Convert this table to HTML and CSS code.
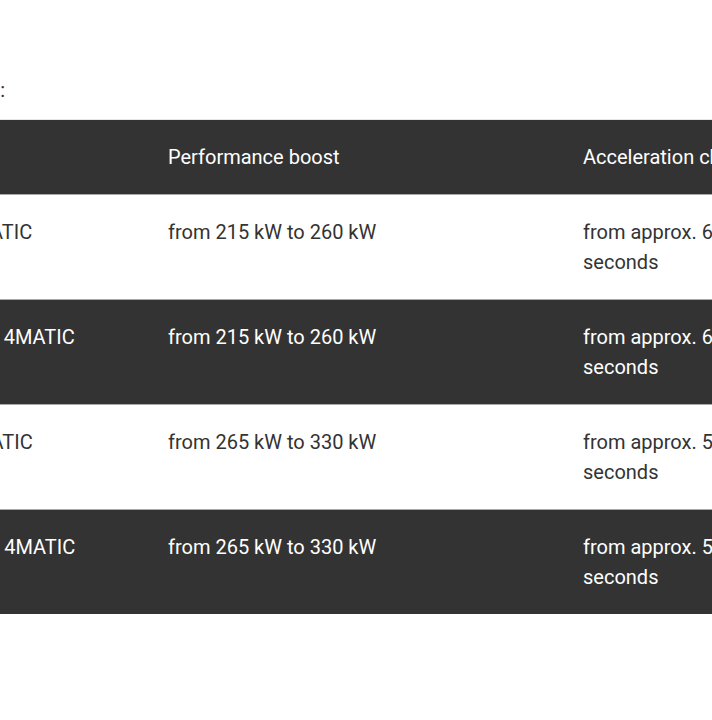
FILE: index.html
```html
<!DOCTYPE html>
<html lang="en">
<head>
<meta charset="utf-8">
<link rel="stylesheet" href="styles.css">
</head>
<body>
<div class="viewport">
  <div class="page">
    <div class="intro"><p class="intro-text">The performance boost is available for the following models:</p></div>
    <div class="table">
      <div class="row head">
        <div class="cell c1">Model</div>
        <div class="cell c2">Performance boost</div>
        <div class="cell c3">Acceleration change 0–100 km/h</div>
      </div>
      <div class="row light">
        <div class="cell c1"><span class="model">EQE 350 4MATIC</span></div>
        <div class="cell c2">from 215 kW to 260 kW</div>
        <div class="cell c3">from approx. 6.6 to 5.6 seconds</div>
      </div>
      <div class="row dark">
        <div class="cell c1"><span class="model">EQE SUV 350 4MATIC</span></div>
        <div class="cell c2">from 215 kW to 260 kW</div>
        <div class="cell c3">from approx. 6.6 to 5.7 seconds</div>
      </div>
      <div class="row light">
        <div class="cell c1"><span class="model">EQS 450 4MATIC</span></div>
        <div class="cell c2">from 265 kW to 330 kW</div>
        <div class="cell c3">from approx. 5.6 to 4.8 seconds</div>
      </div>
      <div class="row dark">
        <div class="cell c1"><span class="model">EQS SUV 450 4MATIC</span></div>
        <div class="cell c2">from 265 kW to 330 kW</div>
        <div class="cell c3">from approx. 5.9 to 5.1 seconds</div>
      </div>
    </div>
  </div>
</div>
</body>
</html>
```

FILE: styles.css
```css
html, body {
  margin: 0;
  padding: 0;
  background: #ffffff;
}

.viewport {
  width: 712px;
  height: 720px;
  overflow: hidden;
}

.page {
  width: 1400px;
  margin-left: -143px;
  font-family: Roboto, "Liberation Sans", sans-serif;
  font-size: 20px;
  line-height: 30px;
  color: #333333;
}

.intro {
  display: flex;
  justify-content: flex-end;
  width: 148px;
  height: 119px;
}

.intro-text {
  margin: 75px 0 0 0;
  white-space: nowrap;
  flex: none;
}

.table {
  display: flex;
  flex-direction: column;
}

.row {
  display: grid;
  grid-template-columns: 287px 415px 415px;
  border-top: 1px solid #a9a9a9;
}

.row.head {
  border-top-color: #e6e6e6;
  background: #333333;
  color: #ffffff;
}

.row.light {
  background: #ffffff;
  color: #333333;
}

.row.dark {
  background: #333333;
  color: #ffffff;
}

.cell {
  padding: 22px 24px 22px 24px;
  min-height: 60px;
}

.head .cell {
  min-height: 30px;
  white-space: nowrap;
}

.c3 {
  max-width: 230px;
}

.model {
  white-space: nowrap;
}
```
